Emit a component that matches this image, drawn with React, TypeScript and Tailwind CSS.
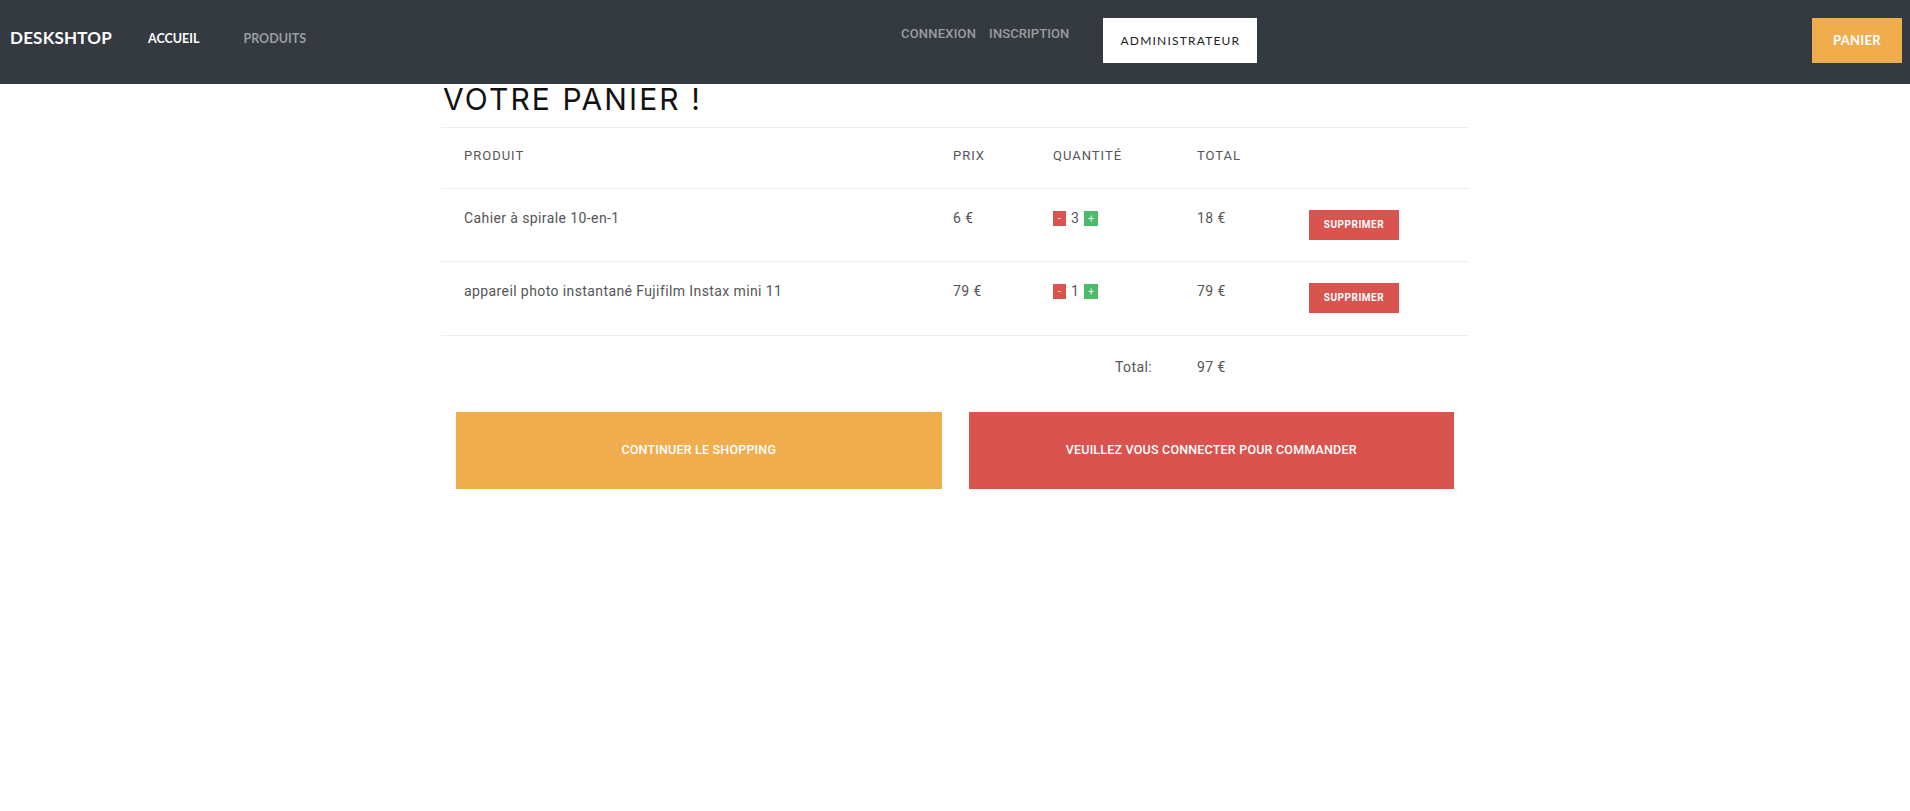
import React from "react";

const items = [
  { name: "Cahier à spirale 10-en-1", price: "6 €", qty: 3, total: "18 €" },
  { name: "appareil photo instantané Fujifilm Instax mini 11", price: "79 €", qty: 1, total: "79 €" },
];

const cols = "grid grid-cols-[488px_100px_144px_112px_1fr]";

export default function App() {
  return (
    <div className="min-h-screen bg-white" style={{ fontFamily: "Roboto, 'Noto Sans', sans-serif" }}>
      <nav className="h-[84px] bg-[#343a40] flex items-center pl-[10px] pr-[8px]">
        <span className="mb-[8px] text-[17px] leading-[24px] font-bold text-white tracking-[0.2px]" style={{ fontFamily: "Lato, sans-serif" }}>
          DESKSHTOP
        </span>
        <span className="ml-[36px] mb-[7px] text-[12.5px] leading-[20px] font-bold text-white" style={{ fontFamily: "Lato, sans-serif" }}>
          ACCUEIL
        </span>
        <span className="ml-[44px] mb-[7px] text-[12.5px] leading-[20px] font-bold text-[#9a9da1]" style={{ fontFamily: "Lato, sans-serif" }}>
          PRODUITS
        </span>
        <span className="ml-[595px] mb-[16px] text-[13px] leading-[20px] font-medium text-[#9a9da1] tracking-[0.2px]">
          CONNEXION
        </span>
        <span className="ml-[13px] mb-[16px] text-[13px] leading-[20px] font-medium text-[#9a9da1] tracking-[0.1px]">
          INSCRIPTION
        </span>
        <span className="ml-[34px] mb-[3px] w-[154px] h-[45px] bg-white flex items-center justify-center text-[12px] text-[#222] tracking-[1.2px]" style={{ fontFamily: "Lato, sans-serif" }}>
          ADMINISTRATEUR
        </span>
        <span className="ml-auto mb-[3px] w-[90px] h-[45px] bg-[#f0ad4e] flex items-center justify-center text-[13px] font-bold text-white tracking-[0.3px]" style={{ fontFamily: "Lato, sans-serif" }}>
          PANIER
        </span>
      </nav>

      <main className="w-[1028px] mx-auto">
        <h1 className="text-[30px] leading-[30px] font-normal text-[#111] tracking-[2.1px] pl-[2px]" style={{ fontFamily: "Inter, sans-serif" }}>
          VOTRE PANIER !
        </h1>

        <div className="mt-[13px] border-t border-[#eeeeee]">
          <div className={`${cols} h-[60px] text-[13px] leading-[20px] text-[#555] tracking-[1px] pt-[18px]`}>
            <div className="pl-[23px]">PRODUIT</div>
            <div className="pl-[24px]">PRIX</div>
            <div className="pl-[24px]">QUANTITÉ</div>
            <div className="pl-[24px]">TOTAL</div>
            <div />
          </div>

          {items.map((it, i) => (
            <div
              key={it.name}
              className={`${cols} border-t border-[#eeeeee] ${i === 0 ? "h-[73px]" : "h-[74px]"} text-[14px] leading-[20px] text-[#555] tracking-[0.4px]`}
            >
              <div className="pl-[23px] pt-[19px]">{it.name}</div>
              <div className="pl-[24px] pt-[19px]">{it.price}</div>
              <div className="pl-[24px] pt-[22px] flex items-start">
                <span className="w-[13px] h-[15px] bg-[#d9534f] text-white text-[10px] leading-[15px] flex justify-center">-</span>
                <span className="mx-[5px] text-[14px] leading-[15px] text-[#555]">{it.qty}</span>
                <span className="w-[14px] h-[15px] bg-[#4dbb69] text-white text-[10px] leading-[15px] flex justify-center">+</span>
              </div>
              <div className="pl-[24px] pt-[19px]">{it.total}</div>
              <div className="pl-[24px] pt-[21px]">
                <span className="w-[90px] h-[30px] bg-[#d9534f] text-white text-[10px] font-bold tracking-[0.5px] flex items-center justify-center">
                  SUPPRIMER
                </span>
              </div>
            </div>
          ))}

          <div className={`${cols} border-t border-[#eeeeee] h-[60px] text-[14px] leading-[20px] text-[#555] tracking-[0.4px] pt-[21px]`}>
            <div />
            <div />
            <div className="text-right pr-[21px]">Total:</div>
            <div className="pl-[24px]">97 €</div>
            <div />
          </div>
        </div>

        <div className="mt-[17px] px-[15px] grid grid-cols-2 gap-[27px]">
          <button className="h-[77px] bg-[#f0ad4e] text-white text-[12.5px] font-medium tracking-[0.2px]">
            CONTINUER LE SHOPPING
          </button>
          <button className="h-[77px] bg-[#d9534f] text-white text-[12.5px] font-medium tracking-[0.2px]">
            VEUILLEZ VOUS CONNECTER POUR COMMANDER
          </button>
        </div>
      </main>
    </div>
  );
}
